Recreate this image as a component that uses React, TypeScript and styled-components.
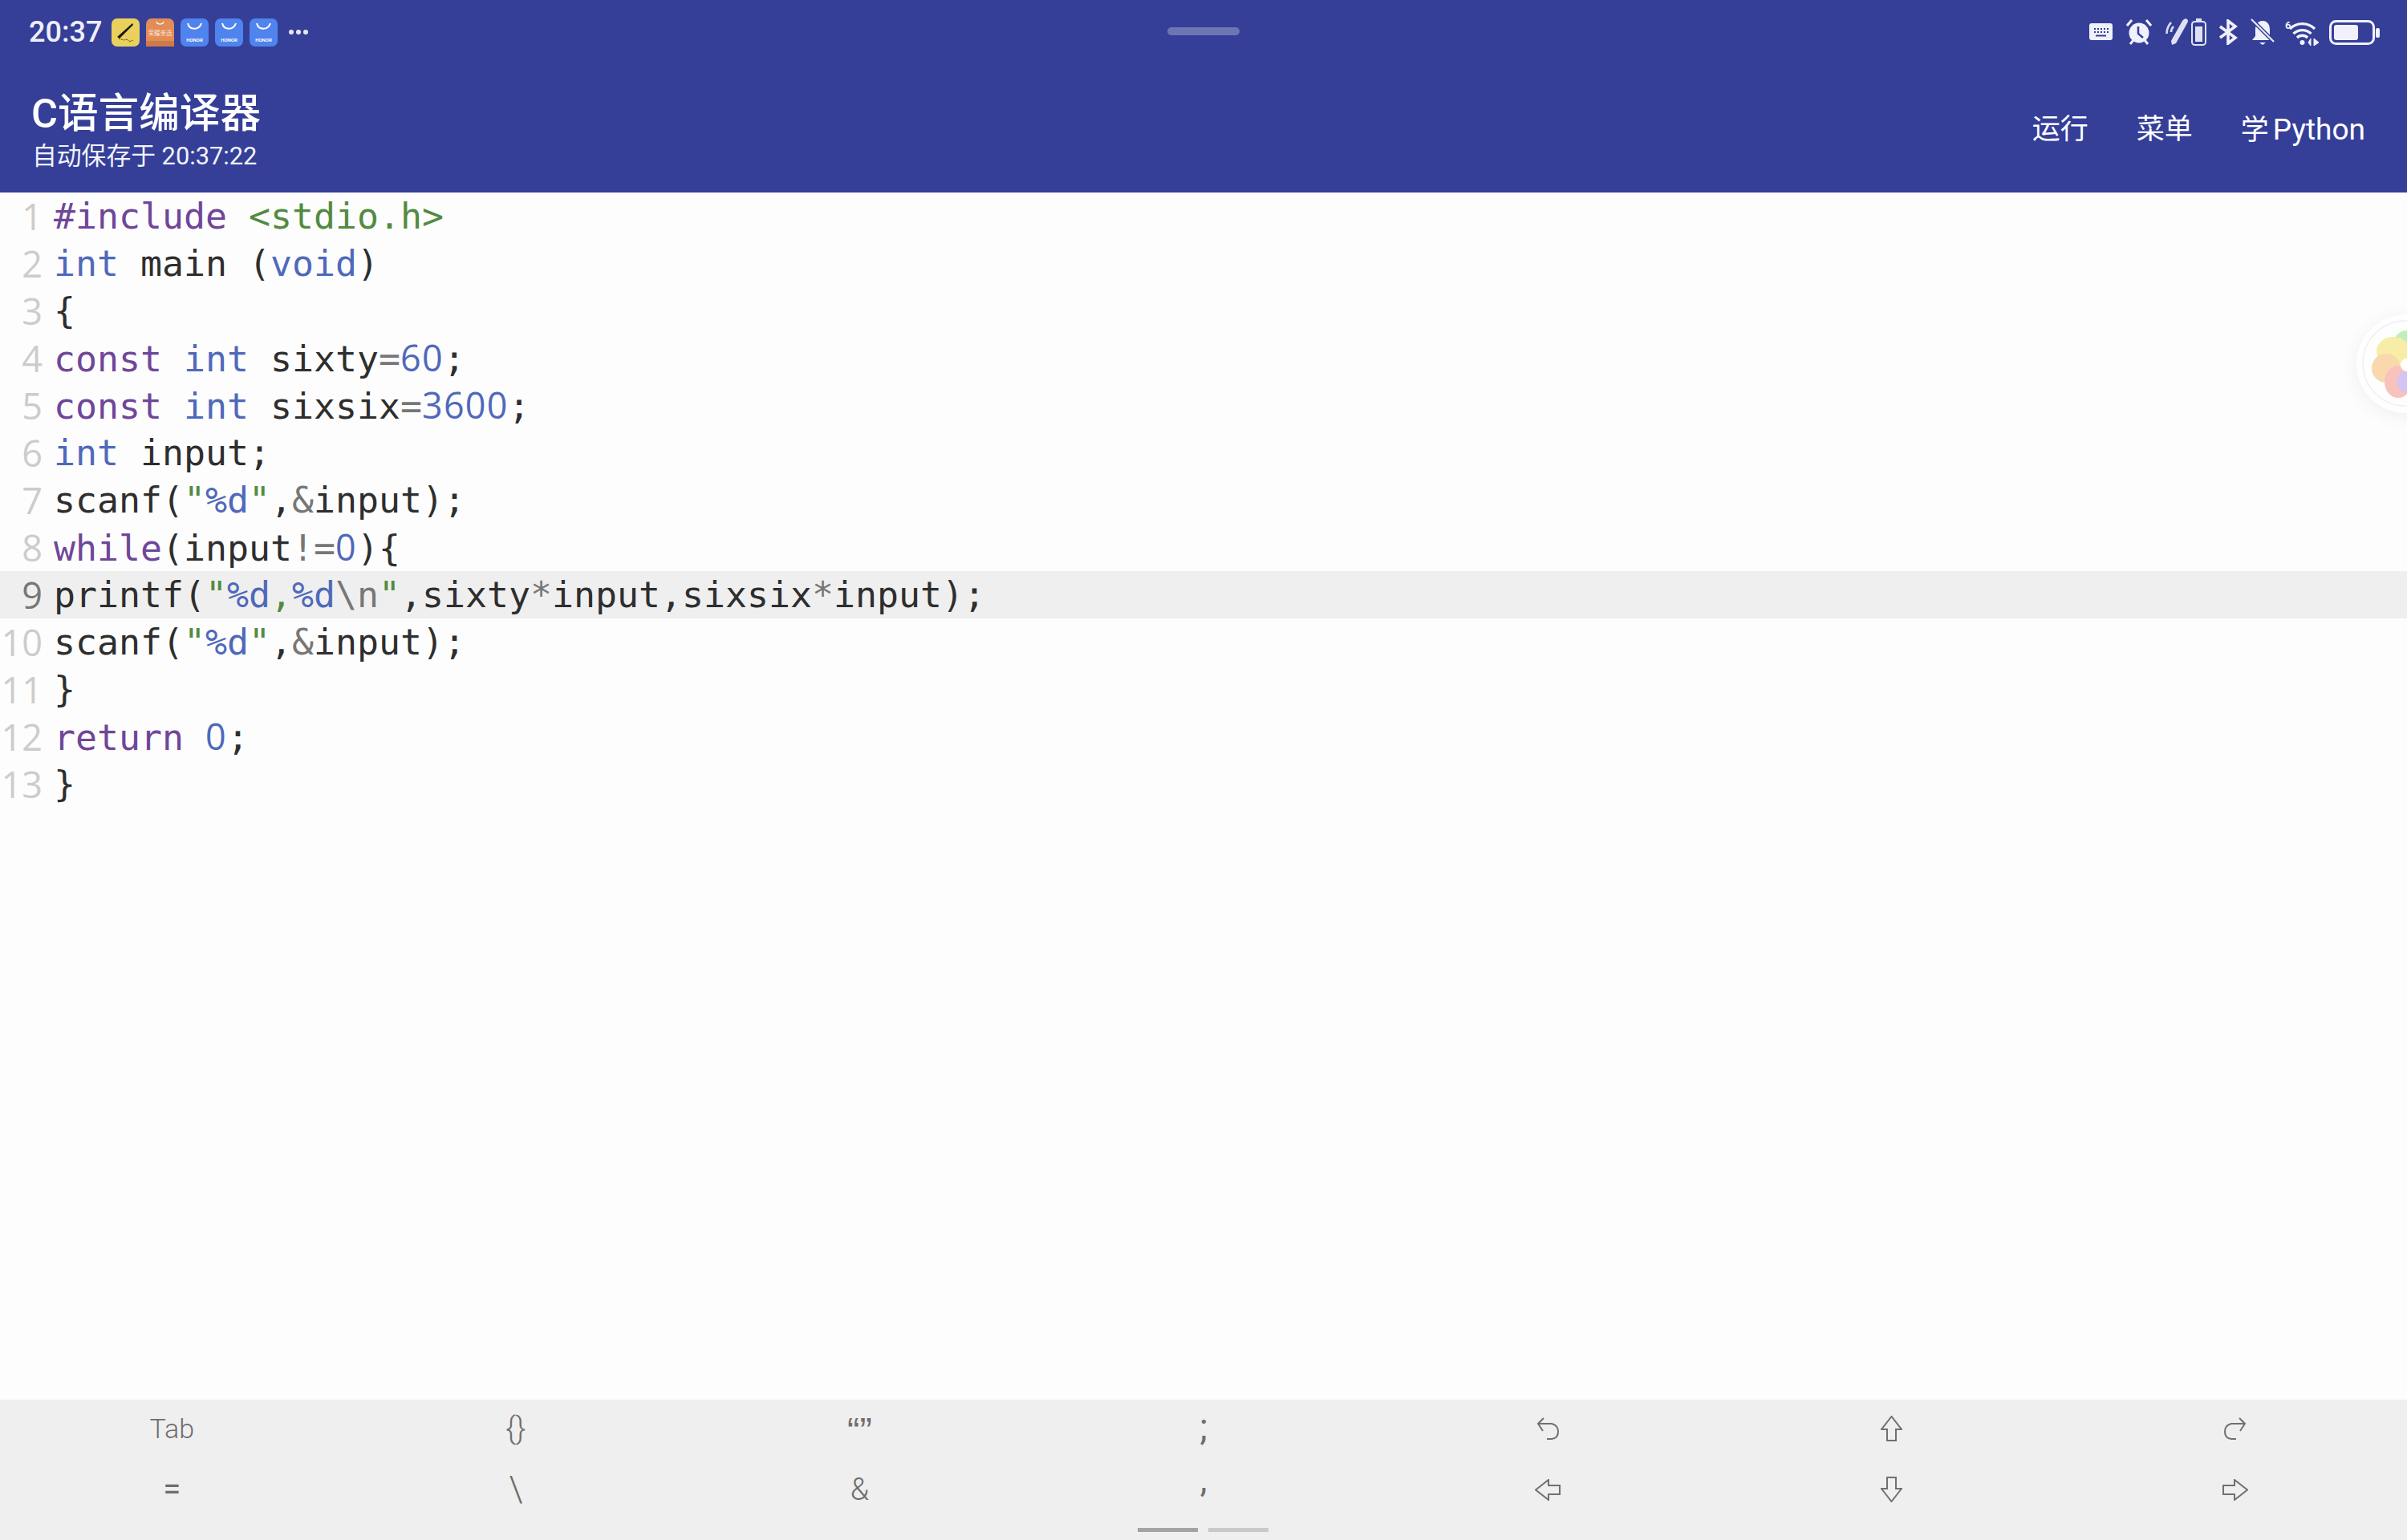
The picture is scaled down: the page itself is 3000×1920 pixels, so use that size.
import React from "react";
import styled, { createGlobalStyle } from "styled-components";

const GlobalStyle = createGlobalStyle`
  html, body {
    margin: 0;
    padding: 0;
    background: #fdfdfd;
  }
`;

const Page = styled.div`
  position: relative;
  width: 3000px;
  height: 1920px;
  display: flex;
  flex-direction: column;
  overflow: hidden;
  background: #fdfdfd;
  font-family: Roboto, "Noto Sans CJK SC", sans-serif;
`;

const Header = styled.header`
  height: 240px;
  flex: none;
  background: #353f98;
  color: #fff;
  display: flex;
  flex-direction: column;
`;

const StatusBar = styled.div`
  height: 80px;
  padding: 0 34px 0 36px;
  display: flex;
  justify-content: space-between;
  align-items: center;
`;

const StatusGroup = styled.div`
  display: flex;
  align-items: center;
`;

const Clock = styled.span`
  font-size: 36px;
  font-weight: 500;
  line-height: 40px;
  color: #eeeffa;
  width: 103px;
`;

const AppIcon = styled.svg`
  width: 35px;
  height: 35px;
  margin-right: 8px;
  display: block;
`;

const MoreDots = styled.svg`
  width: 26px;
  height: 8px;
  margin-left: 5px;
  display: block;
`;

const SysIcon = styled.svg<{ $gap: number }>`
  margin-left: ${(p) => p.$gap}px;
  display: block;
  flex: none;
`;

const HandlePill = styled.div`
  position: absolute;
  left: 1455px;
  top: 34px;
  width: 90px;
  height: 10px;
  border-radius: 5px;
  background: #6d75b5;
`;

const TitleBar = styled.div`
  flex: 1;
  display: flex;
  justify-content: space-between;
  padding: 0 52px 0 39px;
`;

const TitleBlock = styled.div`
  display: flex;
  flex-direction: column;
  padding-top: 30px;
`;

const AppTitle = styled.div`
  font-size: 50.6px;
  font-weight: 500;
  line-height: 64px;
`;

const SaveInfo = styled.div`
  font-size: 30.8px;
  line-height: 40px;
  margin-left: 1px;
  margin-top: 1px;
  color: #f1f2fa;
`;

const Actions = styled.nav`
  display: flex;
  gap: 60px;
  padding-top: 58px;
`;

const Action = styled.span`
  font-size: 35px;
  line-height: 48px;
`;

const Latin = styled.span`
  margin-left: 5px;
  font-size: 37px;
`;

const Editor = styled.main`
  flex: 1;
  display: flex;
  flex-direction: column;
`;

const CodeLine = styled.div<{ $active?: boolean }>`
  height: 59px;
  display: flex;
  align-items: center;
  background: ${(p) => (p.$active ? "#efefef" : "transparent")};
`;

const LineNo = styled.span<{ $active?: boolean }>`
  width: 53px;
  flex: none;
  text-align: right;
  font-family: "Open Sans", sans-serif;
  font-size: 45px;
  line-height: 59px;
  color: ${(p) => (p.$active ? "#777" : "#ccc")};
`;

const CodeText = styled.span`
  margin-left: 14px;
  font-family: "DejaVu Sans Mono", monospace;
  font-size: 44.85px;
  line-height: 59px;
  white-space: pre;
  color: #2e2e2e;
`;

const TOKEN_COLORS = {
  k: "#6f4699",
  t: "#4f69ba",
  n: "#4f69ba",
  s: "#528b40",
  o: "#777777",
  p: "#2e2e2e",
};

type Kind = keyof typeof TOKEN_COLORS;

// the editor's digits have a plain zero, which DejaVu Mono does not
const Token = styled.span<{ $kind: Kind }>`
  color: ${(p) => TOKEN_COLORS[p.$kind]};
  ${(p) => p.$kind === "n" && `font-family: "Open Sans", sans-serif; letter-spacing: 1.25px;`}
`;

const CODE: [string, Kind][][] = [
  [["#include", "k"], [" ", "p"], ["<stdio.h>", "s"]],
  [["int", "t"], [" main (", "p"], ["void", "t"], [")", "p"]],
  [["{", "p"]],
  [["const", "k"], [" ", "p"], ["int", "t"], [" sixty", "p"], ["=", "o"], ["60", "n"], [";", "p"]],
  [["const", "k"], [" ", "p"], ["int", "t"], [" sixsix", "p"], ["=", "o"], ["3600", "n"], [";", "p"]],
  [["int", "t"], [" input;", "p"]],
  [["scanf(", "p"], ['"', "s"], ["%d", "t"], ['"', "s"], [",", "p"], ["&", "o"], ["input);", "p"]],
  [["while", "k"], ["(input", "p"], ["!=", "o"], ["0", "n"], ["){", "p"]],
  [
    ["printf(", "p"], ['"', "s"], ["%d", "t"], [",", "s"], ["%d", "t"], ["\\n", "o"], ['"', "s"],
    [",sixty", "p"], ["*", "o"], ["input,sixsix", "p"], ["*", "o"], ["input);", "p"],
  ],
  [["scanf(", "p"], ['"', "s"], ["%d", "t"], ['"', "s"], [",", "p"], ["&", "o"], ["input);", "p"]],
  [["}", "p"]],
  [["return", "k"], [" ", "p"], ["0", "n"], [";", "p"]],
  [["}", "p"]],
];

const FloatBall = styled.div`
  position: absolute;
  left: 2937px;
  top: 392px;
  width: 123px;
  height: 123px;
  border-radius: 50%;
  background: #fefefe;
  box-shadow: 0 4px 24px rgba(0, 0, 0, 0.06);
`;

const KeyBar = styled.footer`
  position: relative;
  flex: none;
  height: 175px;
  background: #efefef;
  display: grid;
  grid-template-columns: repeat(7, 1fr);
  grid-template-rows: 76px 76px;
  align-content: start;
`;

const Key = styled.div`
  display: flex;
  align-items: center;
  justify-content: center;
  padding-bottom: 4px;
  box-sizing: border-box;
  color: #6e6e6e;
`;

const KeyLabel = styled.span<{ $size: number; $lift?: number; $weight?: number; $serifless?: boolean }>`
  font-size: ${(p) => p.$size}px;
  font-weight: ${(p) => p.$weight ?? 300};
  line-height: 40px;
  margin-top: ${(p) => -(p.$lift ?? 0) * 2}px;
  ${(p) => p.$serifless && `font-family: "Liberation Sans", sans-serif;`}
`;

const PageDots = styled.div`
  position: absolute;
  left: 1418px;
  top: 160px;
  display: flex;
  gap: 13px;
`;

const PageDot = styled.div<{ $on?: boolean }>`
  width: 75px;
  height: 5px;
  background: ${(p) => (p.$on ? "#a3a3a3" : "#c9c9c9")};
`;

const ArrowIcon = styled.svg`
  display: block;
  fill: none;
  stroke: #707070;
  stroke-width: 2;
`;

const BlueBag = () => (
  <AppIcon viewBox="0 0 35 35">
    <rect width="35" height="35" rx="7" fill="#4f83ee" />
    <path d="M9 6 C11 15 23 15 26 6" fill="none" stroke="#fff" strokeWidth="2" />
    <text x="17.5" y="29" fontSize="6" fontWeight="700" textAnchor="middle" fill="#fff" fontFamily="Roboto">
      HONOR
    </text>
  </AppIcon>
);

const StatusLeft = () => (
  <StatusGroup>
    <Clock>20:37</Clock>
    <AppIcon viewBox="0 0 35 35">
      <rect width="35" height="35" rx="7" fill="#e9d15c" />
      <path d="M7 23 L26 6 L27 8 L10 25 Z" fill="#1c1a14" />
      <path d="M9 25 L15 27 L20 26 L22 29 L27 27" fill="none" stroke="#4a4222" strokeWidth="1" strokeDasharray="2 1" />
    </AppIcon>
    <AppIcon viewBox="0 0 35 35">
      <rect width="35" height="35" rx="7" fill="#e28c57" />
      <rect y="28" width="35" height="7" fill="#d07a48" />
      <path d="M13 4 C14 8 21 8 22 4" fill="none" stroke="#fff" strokeWidth="1.2" />
      <text x="17.5" y="21" fontSize="7.5" textAnchor="middle" fill="#fbe3d2" fontFamily="'Noto Sans CJK SC'">
        荣耀亲选
      </text>
    </AppIcon>
    <BlueBag />
    <BlueBag />
    <BlueBag />
    <MoreDots viewBox="0 0 26 8">
      <circle cx="4" cy="4" r="3" fill="#e6e8f6" />
      <circle cx="13" cy="4" r="3" fill="#e6e8f6" />
      <circle cx="22" cy="4" r="3" fill="#e6e8f6" />
    </MoreDots>
  </StatusGroup>
);

const StatusRight = () => (
  <StatusGroup>
    <SysIcon $gap={0} width="29" height="22" viewBox="0 0 29 22">
      <rect width="29" height="21" rx="3" fill="#f0f1fa" />
      <path d="M6 7h2M10 7h2M14 7h2M18 7h2M22 7h2M6 11h2M10 11h2M14 11h2M18 11h2M22 11h2M8 15.5h13" stroke="#353f98" strokeWidth="1.8" />
    </SysIcon>
    <SysIcon $gap={17} width="32" height="32" viewBox="0 0 32 32">
      <circle cx="16" cy="17" r="12.5" fill="#f0f1fa" />
      <path d="M1 8 L7 1 M31 8 L25 1 M5 31 L9 26 M27 31 L23 26" stroke="#f0f1fa" strokeWidth="3" />
      <path d="M15 9 V18 L21 23" fill="none" stroke="#353f98" strokeWidth="2.5" />
    </SysIcon>
    <SysIcon $gap={17} width="51" height="34" viewBox="0 0 51 34">
      <path d="M8 33 L7 28 L21 3 Q24 -1 27 1 Q29 3 27 6 L13 31 Z" fill="#dfe1f2" />
      <path d="M1.5 19 Q1.5 11 7 5 M7 17 Q7 13 10 10" fill="none" stroke="#d6d9ee" strokeWidth="2.6" />
      <rect x="33" y="4" width="17" height="29" rx="3.5" fill="none" stroke="#dfe1f2" strokeWidth="2" />
      <rect x="38" y="0" width="7" height="3" fill="#dfe1f2" />
      <rect x="37" y="10" width="9" height="19" fill="#dfe1f2" />
    </SysIcon>
    <SysIcon $gap={15} width="25" height="32" viewBox="0 0 25 32">
      <path d="M2 9 L21 23 L12 30 V2 L21 9 L2 23" fill="none" stroke="#f0f1fa" strokeWidth="3.6" />
    </SysIcon>
    <SysIcon $gap={15} width="30" height="34" viewBox="0 0 30 34">
      <path d="M15 3 C22 3 24 9 24 14 V22 L28 27 H2 L6 22 V14 C6 9 8 3 15 3 Z" fill="#f0f1fa" />
      <path d="M11 30 H19 L15 33 Z" fill="#f0f1fa" />
      <path d="M1 1 L29 29" stroke="#353f98" strokeWidth="5" />
      <path d="M1 1 L29 29" stroke="#f0f1fa" strokeWidth="2" />
    </SysIcon>
    <SysIcon $gap={13} width="44" height="33" viewBox="0 0 44 33">
      <text x="0" y="12" fontSize="13" fontWeight="700" fill="#f0f1fa" fontFamily="Roboto">6</text>
      <path d="M6 12 A22 22 0 0 1 37 12 M10.5 18 A16 16 0 0 1 32.5 18 M15 23 A9 9 0 0 1 28 23" fill="none" stroke="#f0f1fa" strokeWidth="3.4" />
      <circle cx="21.5" cy="29" r="3" fill="#f0f1fa" />
      <path d="M29 29 L32 24 V33 Z M36 24 L42 29 L36 33 Z" fill="#f0f1fa" stroke="#f0f1fa" strokeWidth="1" />
    </SysIcon>
    <SysIcon $gap={11} width="63" height="31" viewBox="0 0 63 31">
      <rect x="1.5" y="1.5" width="54" height="28" rx="7" fill="none" stroke="#f0f1fa" strokeWidth="3" />
      <rect x="6" y="6" width="30" height="19" rx="3" fill="#f0f1fa" />
      <rect x="58" y="10" width="5" height="12" rx="2" fill="#f0f1fa" />
    </SysIcon>
  </StatusGroup>
);

const UP = "M13.5 1 L1 17 H8 V31 H19 V17 H26 Z";
const DOWN = "M8 1 H19 V15 H26 L13.5 31 L1 15 H8 Z";
const LEFT = "M1 13.5 L17 1 V8 H31 V19 H17 V26 Z";
const RIGHT = "M1 8 H15 V1 L31 13.5 L15 26 V19 H1 Z";

const Arrow = ({ d, w, h }: { d: string; w: number; h: number }) => (
  <ArrowIcon width={w} height={h} viewBox={`0 0 ${w} ${h}`}>
    <path d={d} />
  </ArrowIcon>
);

const KEYS: React.ReactNode[] = [
  <KeyLabel $size={34}>Tab</KeyLabel>,
  <KeyLabel $size={38}>{"{}"}</KeyLabel>,
  <KeyLabel $size={46} $weight={400} $lift={-3} $serifless>“”</KeyLabel>,
  <KeyLabel $size={46} $weight={400} $lift={2}>;</KeyLabel>,
  <Arrow w={28} h={28} d="M9 1 L2 8 L8 17 M2 8 H19 Q27 10 27 18 Q27 26 19 27 H13" />,
  <Arrow w={27} h={32} d={UP} />,
  <Arrow w={28} h={28} d="M19 1 L26 8 L20 17 M26 8 H9 Q1 10 1 18 Q1 26 9 27 H15" />,
  <KeyLabel $size={40} $weight={400}>=</KeyLabel>,
  <KeyLabel $size={44}>\</KeyLabel>,
  <KeyLabel $size={38}>&amp;</KeyLabel>,
  <KeyLabel $size={44} $weight={400} $lift={12}>,</KeyLabel>,
  <Arrow w={32} h={27} d={LEFT} />,
  <Arrow w={27} h={32} d={DOWN} />,
  <Arrow w={32} h={27} d={RIGHT} />,
];

const App = () => {
  return (
    <Page>
      <GlobalStyle />
      <Header>
        <StatusBar>
          <StatusLeft />
          <StatusRight />
        </StatusBar>
        <TitleBar>
          <TitleBlock>
            <AppTitle>C语言编译器</AppTitle>
            <SaveInfo>自动保存于 20:37:22</SaveInfo>
          </TitleBlock>
          <Actions>
            <Action>运行</Action>
            <Action>菜单</Action>
            <Action>
              学<Latin>Python</Latin>
            </Action>
          </Actions>
        </TitleBar>
      </Header>
      <HandlePill />
      <Editor>
        {CODE.map((tokens, i) => (
          <CodeLine key={i} $active={i === 8}>
            <LineNo $active={i === 8}>{i + 1}</LineNo>
            <CodeText>
              {tokens.map(([text, kind], j) => (
                <Token key={j} $kind={kind}>
                  {text}
                </Token>
              ))}
            </CodeText>
          </CodeLine>
        ))}
      </Editor>
      <FloatBall>
        <svg width="63" height="123" viewBox="0 0 63 123">
          <circle cx="61" cy="61" r="53" fill="none" stroke="#efefef" strokeWidth="1.5" />
          <ellipse cx="62" cy="39" rx="16" ry="19" fill="#c0eebb" />
          <ellipse cx="46" cy="46" rx="21" ry="18" fill="#f7eda6" />
          <ellipse cx="37" cy="67" rx="18" ry="18" fill="#fad8ae" />
          <ellipse cx="52" cy="84" rx="17" ry="20" fill="#f8c2bd" />
          <ellipse cx="63" cy="84" rx="12" ry="14" fill="#d3c4f2" />
          <circle cx="63" cy="63" r="8" fill="#fff" />
        </svg>
      </FloatBall>
      <KeyBar>
        {KEYS.map((k, i) => (
          <Key key={i}>{k}</Key>
        ))}
        <PageDots>
          <PageDot $on />
          <PageDot />
        </PageDots>
      </KeyBar>
    </Page>
  );
};

export default App;
